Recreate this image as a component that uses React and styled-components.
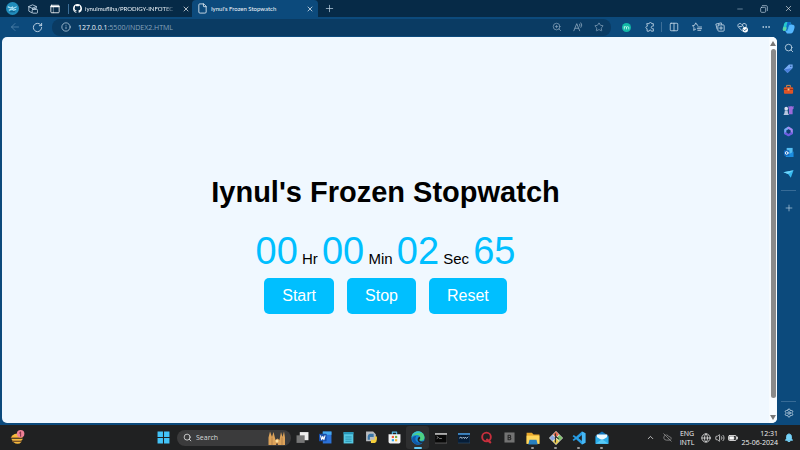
import React, { useEffect, useState } from "react";
import styled, { createGlobalStyle } from "styled-components";
import {
  ArrowLeft, RotateCw, Info, ZoomIn, Star, Columns2, Ellipsis,
  Search, Plus, Settings, X, Minus, File, ChevronUp, Globe, Volume2, CloudOff,
} from "lucide-react";

const GlobalStyle = createGlobalStyle`
  * { box-sizing: border-box; }
  body { margin: 0; background: #0c4a7c; font-family: "Open Sans", "Noto Sans", sans-serif; }
  button, input { font: inherit; color: inherit; }
`;

const Desktop = styled.div`
  display: flex;
  flex-direction: column;
  height: 100vh;
  overflow: hidden;
  color: #dce8f2;
  font-size: 7px;
`;

const TitleBar = styled.header`
  display: flex;
  flex: none;
  height: 17px;
  background: #062a47;
`;

const IconButton = styled.button`
  display: flex;
  flex: none;
  align-items: center;
  justify-content: center;
  width: ${(p) => p.$w || 23}px;
  height: ${(p) => p.$h || 17}px;
  padding: 0;
  border: 0;
  background: none;
  color: ${(p) => p.$color || "#c5d8e8"};
  svg { display: block; }
`;

const Tab = styled.div`
  display: flex;
  align-items: center;
  width: ${(p) => p.$w}px;
  height: 17px;
  padding-left: ${(p) => (p.$active ? 5 : 4)}px;
  gap: 3px;
  color: #f0f6fb;
  background: ${(p) => (p.$active ? "#0c4a7c" : "transparent")};
  border-radius: 4px 4px 0 0;
  svg { flex: none; }
`;

const TabTitle = styled.span`
  flex: 1;
  min-width: 0;
  white-space: nowrap;
  font-family: Lato, "Open Sans", sans-serif;
  font-size: ${(p) => (p.$small ? 6 : 7)}px;
  mask-image: ${(p) => (p.$fade ? "linear-gradient(to right, #000 85%, transparent)" : "none")};
`;

const VerticalRule = styled.span`
  flex: none;
  align-self: center;
  width: 1px;
  height: 10px;
  background: #3d6f98;
`;

const Spacer = styled.div`
  flex: 1;
`;

const Toolbar = styled.div`
  display: flex;
  flex: none;
  align-items: center;
  height: 20px;
  padding-left: 3px;
  background: #0c4a7c;
`;

const AddressBar = styled.form`
  display: flex;
  flex: 1;
  align-items: center;
  height: 17px;
  margin: 0 4px 0 3px;
  padding: 0 2px;
  border-radius: 8px;
  background: #0a3b63;
`;

const Host = styled.label`
  color: #f0f6fb;
  font-size: 7px;
`;

const UrlInput = styled.input`
  flex: 1;
  min-width: 0;
  padding: 0;
  border: 0;
  outline: 0;
  background: none;
  color: #86a3bb;
  font-size: 7px;
`;

const Workspace = styled.div`
  display: flex;
  flex: 1;
  min-height: 0;
  padding: 0 0 2px 2px;
  background: #0c4a7c;
`;

const Page = styled.main`
  display: flex;
  flex: 1;
  overflow: hidden;
  border-radius: 5px;
  background: #f0f8ff;
`;

const Stopwatch = styled.section`
  display: flex;
  flex: 1;
  flex-direction: column;
  align-items: center;
  justify-content: center;
  font-family: "Liberation Sans", Arial, sans-serif;
  color: #000;
`;

const Heading = styled.h1`
  margin: 28px 0 19px;
  font-size: 29px;
  line-height: 36px;
`;

const Time = styled.div`
  margin-bottom: 5px;
  font-size: 15px;
  line-height: 20px;
  white-space: nowrap;
`;

const Digits = styled.span`
  color: #00bfff;
  font-size: 38px;
  line-height: 44px;
`;

const Controls = styled.div`
  display: flex;
  gap: 13px;
`;

const ControlButton = styled.button`
  height: 36px;
  padding: 0 18px;
  border: 0;
  border-radius: 5px;
  background: #00bfff;
  color: #fff;
  font-size: 16px;
`;

const ScrollTrack = styled.div`
  display: flex;
  flex-direction: column;
  align-items: center;
  width: 8px;
  padding: 4px 0 3px;
  gap: 3px;
  background: #f8fcff;
`;

const ScrollThumb = styled.div`
  flex: 1;
  width: 5px;
  margin-bottom: 14px;
  border-radius: 3px;
  background: #8a8a8a;
`;

const Sidebar = styled.aside`
  display: flex;
  flex: none;
  flex-direction: column;
  align-items: center;
  width: 23px;
`;

const HorizontalRule = styled.span`
  flex: none;
  width: 15px;
  height: 1px;
  margin: ${(p) => (p.$roomy ? "6px 0" : "0")};
  background: #376b96;
`;

const Taskbar = styled.footer`
  display: flex;
  flex: none;
  align-items: center;
  height: 25px;
  background: #202122;
`;

const TaskbarSide = styled.div`
  display: flex;
  align-items: center;
  flex: ${(p) => (p.$start ? "0 1 152px" : "none")};
  padding-left: ${(p) => (p.$start ? 6 : 0)}px;
`;

const TaskSearch = styled.label`
  display: flex;
  flex: none;
  align-items: center;
  gap: 4px;
  width: 114px;
  height: 16px;
  margin-left: 2px;
  padding: 0 6px;
  border-radius: 8px;
  background: #3b3b3c;
  color: #f0f0f0;
`;

const SearchInput = styled.input`
  flex: 1;
  min-width: 0;
  padding: 0;
  border: 0;
  outline: 0;
  background: none;
  font-size: 7px;
  &::placeholder { color: #d8d8d8; opacity: 1; }
`;

const AppButton = styled(IconButton)`
  position: relative;
  height: 23px;
  border-radius: 3px;
  background: ${(p) => (p.$active ? "#2e2f30" : "none")};
  &::after {
    content: "";
    display: ${(p) => (p.$open ? "block" : "none")};
    position: absolute;
    bottom: 0;
    width: ${(p) => (p.$active ? 8 : 3)}px;
    height: 2px;
    border-radius: 1px;
    background: ${(p) => (p.$active ? "#63c9f5" : "#9a9a9a")};
  }
`;

const TrayText = styled.div`
  width: ${(p) => p.$w}px;
  font-size: 7px;
  line-height: 9px;
  text-align: ${(p) => p.$align};
  white-space: nowrap;
  color: #f2f2f2;
`;

const Icon = ({ size = 12, children }) => (
  <svg width={size} height={size} viewBox="0 0 24 24" fill="none" stroke="currentColor" strokeWidth="2" strokeLinecap="round" strokeLinejoin="round" aria-hidden="true">
    {children}
  </svg>
);

const ProfileIcon = () => (
  <Icon size={13}>
    <circle cx="12" cy="12" r="12" fill="#218dbc" stroke="none" />
    <path d="M4 9l5 2 3-2 1 3 6-3M6 15l5-2 3 2 4-1" stroke="#b5e4f6" />
    <path d="M8 18h8" stroke="#0d5682" />
  </Icon>
);
const WorkspacesIcon = () => (
  <Icon size={10}>
    <path d="M2 6l9-4 9 4-9 4zM2 6v11l7 4M11 10v2M20 6v4" />
    <rect x="10" y="13" width="13" height="9" rx="2" />
    <path d="M14 13v-2h5v2" />
  </Icon>
);
const TabActionsIcon = () => (
  <Icon size={10}>
    <rect x="2" y="3" width="20" height="18" rx="2" />
    <path d="M3 6h18" strokeWidth="4" />
    <path d="M8 8v13" strokeWidth="1" />
  </Icon>
);
const GithubIcon = () => (
  <svg width="9" height="9" viewBox="0 0 16 16" fill="#fff" aria-hidden="true">
    <path d="M8 0C3.58 0 0 3.58 0 8c0 3.54 2.29 6.53 5.47 7.59.4.07.55-.17.55-.38v-1.49c-2.01.37-2.53-.49-2.69-.94-.09-.23-.48-.94-.82-1.13-.28-.15-.68-.52-.01-.53.63-.01 1.08.58 1.23.82.72 1.21 1.87.87 2.33.66.07-.52.28-.87.51-1.07-1.78-.2-3.64-.89-3.64-3.95 0-.87.31-1.59.82-2.15-.08-.2-.36-1.02.08-2.12 0 0 .67-.21 2.2.82a7.42 7.42 0 014 0c1.53-1.04 2.2-.82 2.2-.82.44 1.1.16 1.92.08 2.12.51.56.82 1.27.82 2.15 0 3.07-1.87 3.75-3.65 3.95.29.25.54.73.54 1.48v2.2c0 .21.15.46.55.38A8.01 8.01 0 0016 8c0-4.42-3.58-8-8-8z" />
  </svg>
);
const ExtensionIcon = () => (
  <Icon size={10}>
    <path d="M5 4h5c0-4 6-4 6 0h4v6h-2c-4 0-4 6 0 6h2v6h-5c0-4-5-4-5 0H5v-6c-4 0-4-6 0-6z" />
  </Icon>
);
const ReadAloudIcon = () => (
  <Icon size={10}>
    <path d="M2 21L9 4l7 17M5 15h8M16 5q2 2 0 5M19 2q5 5 0 11" />
  </Icon>
);
const MediaIcon = () => (
  <Icon size={9}>
    <circle cx="12" cy="12" r="12" fill="#13b9a7" stroke="none" />
    <path d="M6 16v-6M6 11q3-3 6 0v5M12 11q3-3 6 0v5" stroke="#d8fff8" />
  </Icon>
);
const FavoritesIcon = () => (
  <Icon size={10}>
    <path d="M14 8l-2-1-3-5-3 6-5 1 4 4-1 7 5-3M14 12h9M13 16h10M14 20h7" />
  </Icon>
);
const CollectionsIcon = () => (
  <Icon size={10}>
    <path d="M5 17L2 5l13-3 1 4" />
    <rect x="7" y="7" width="15" height="15" rx="2" />
    <path d="M14.500 11v7M11 14.500h7" />
  </Icon>
);
const HealthIcon = () => (
  <Icon size={11}>
    <path d="M12 20L3 11C-1 5 7 0 11 6c5-6 12-1 9 4M5 10h5l2-3 3 5" />
    <circle cx="18" cy="17" r="6" fill="#fff" stroke="none" />
    <path d="M15 17l2 2 4-4" stroke="#0c4a7c" />
  </Icon>
);
const CopilotIcon = () => (
  <Icon size={13}>
    <path d="M8 2h7l3 5-4 2-3 9H5c-5 0-4-5-2-9 1-5 2-7 5-7z" fill="#25c7cf" stroke="none" />
    <path d="M10 2h5l3 6h-5L9 20H6z" fill="#126bc6" stroke="none" />
    <path d="M14 7h5c5 0 5 4 3 9-1 4-3 7-6 7H9l-3-5h4z" fill="#54b7ff" stroke="none" />
    <path d="M3 11l6 1-2 6H4c-4 0-2-4-1-7z" fill="#5fd8a5" stroke="none" />
  </Icon>
);
const TagIcon = () => (
  <Icon size={11}>
    <path d="M13 3h8v8L10 22l-8-8z" fill="#79acf4" stroke="none" />
    <path d="M2 14l8 8 10-11z" fill="#4a7fda" stroke="none" />
    <circle cx="17" cy="7" r="1.500" fill="#174d91" stroke="none" />
  </Icon>
);
const ToolboxIcon = () => (
  <Icon size={11}>
    <path d="M8 7V3h8v4" stroke="#f08a40" />
    <rect x="2" y="7" width="20" height="14" rx="2" fill="#df5427" stroke="none" />
    <path d="M2 12h20" stroke="#9d3218" />
    <path d="M10 10h4v4h-4z" fill="#ffd18c" stroke="none" />
  </Icon>
);
const GamesIcon = () => (
  <Icon size={11}>
    <path d="M12 2h2v2h2V2h3v2h2V2h2v6l-2 2v10h-8V9l-1-1z" fill="#9b6bdb" stroke="none" />
    <circle cx="7" cy="8" r="4" fill="#d7dfef" stroke="none" />
    <path d="M4 12h6l1 6 2 4H1l2-4z" fill="#b8c6df" stroke="none" />
  </Icon>
);
const OfficeIcon = () => (
  <Icon size={11}>
    <path d="M12 4l-7 4v8" stroke="#78a9f6" strokeWidth="5" />
    <path d="M12 4l7 4v8" stroke="#a58af0" strokeWidth="5" />
    <path d="M5 16l7 4 7-4" stroke="#6f5be0" strokeWidth="5" />
    <path d="M12 8l4 2v4l-4 2-4-2v-4z" fill="#0f3f73" stroke="none" />
  </Icon>
);
const OutlookIcon = () => (
  <Icon size={11}>
    <path d="M8 2h13v18H8z" fill="#53bdf4" stroke="none" />
    <path d="M6 10l8 5 9-5v12H6z" fill="#1b8de0" stroke="none" />
    <rect x="2" y="7" width="12" height="12" rx="1" fill="#1269bd" stroke="none" />
    <circle cx="8" cy="13" r="3" stroke="#fff" />
  </Icon>
);
const SendIcon = () => (
  <Icon size={11}>
    <path d="M1 9l22-4-6 16-6-8z" fill="#36b9ef" stroke="none" />
    <path d="M11 13l12-8L1 9z" fill="#6fd5fb" stroke="none" />
  </Icon>
);
const WidgetIcon = () => (
  <Icon size={15}>
    <path d="M3 9q9-7 17 0v3H2zM2 14h19l-3 3H4zM5 19h13q-5 6-13 0" fill="#f5b83c" stroke="none" />
    <path d="M2 12h17M4 18h14" stroke="#dc8b31" strokeWidth="1" />
    <circle cx="17" cy="6" r="6" fill="#ef8196" stroke="none" />
    <path d="M15 5l2-2v7" stroke="#722b3d" strokeWidth="1.500" />
  </Icon>
);
const WindowsIcon = () => (
  <Icon size={13}>
    <path d="M1 1h10v10H1zM13 1h10v10H13zM1 13h10v10H1zM13 13h10v10H13z" fill="#43c3f7" stroke="none" />
  </Icon>
);
const CathedralIcon = () => (
  <svg width="17" height="14" viewBox="0 0 34 28" aria-hidden="true">
    <path d="M1 28V13L4 1l4 11 3-10 4 16 4-3 4 3 3-16 3 10 3-11 2 12v15z" fill="#dda35a" />
    <path d="M8 13v15M28 13v15" stroke="#8a6038" strokeWidth="1" />
    <circle cx="18" cy="20" r="3" fill="#fbe0a0" />
    <path d="M16 28v-3h4v3" fill="#5c412e" />
  </svg>
);
const TaskViewIcon = () => (
  <Icon size={13}>
    <path d="M7 2h16v15H7z" fill="#eeeeee" stroke="none" />
    <path d="M1 8h15v14H1z" fill="#777" stroke="none" />
  </Icon>
);
const WordIcon = () => (
  <Icon size={13}>
    <path d="M7 1h16v22H7z" fill="#2b72d9" stroke="none" />
    <path d="M7 1h16v6H7z" fill="#45a8ed" stroke="none" />
    <rect x="0" y="5" width="14" height="14" rx="1" fill="#174da6" stroke="none" />
    <path d="M3 9l2 7 2-6 2 6 2-7" stroke="#fff" />
  </Icon>
);
const NotepadIcon = () => (
  <Icon size={13}>
    <path d="M3 2h18v21H3z" fill="#56c8e2" stroke="none" />
    <path d="M3 2h18v4H3z" fill="#2695b8" stroke="none" />
    <path d="M7 11h10M7 15h10M7 19h10" stroke="#1f87a8" strokeWidth="1.500" />
  </Icon>
);
const PythonIcon = () => (
  <Icon size={13}>
    <path d="M2 1h13l5 5v13H2z" fill="#b8bcc0" stroke="none" />
    <path d="M9 5h7v6H9v5H5v-6q0-4 4-5" fill="#3976a8" stroke="none" />
    <path d="M18 10h4v5q0 5-4 7h-7v-6h7z" fill="#f5cf3b" stroke="none" />
  </Icon>
);
const StoreIcon = () => (
  <Icon size={13}>
    <path d="M8 7V2h8v5" stroke="#55bce8" />
    <path d="M1 6h22v14q0 3-3 3H4q-3 0-3-3z" fill="#f2f3f3" stroke="none" />
    <path d="M7 9h4v4H7z" fill="#ee5c38" stroke="none" />
    <path d="M13 9h4v4h-4z" fill="#77ae3b" stroke="none" />
    <path d="M7 15h4v4H7z" fill="#2aa4e8" stroke="none" />
    <path d="M13 15h4v4h-4z" fill="#f6b72d" stroke="none" />
  </Icon>
);
const EdgeIcon = () => (
  <Icon size={14}>
    <circle cx="12" cy="12" r="11.500" fill="#1687d5" stroke="none" />
    <path d="M1 10C3-2 21-2 23 10c1 7-7 8-9 5 4-5 0-9-5-8-4 0-7 2-8 3z" fill="#4dd183" stroke="none" />
    <path d="M1 11C3 1 14-1 19 3 10 2 4 5 1 11z" fill="#34bdd8" stroke="none" />
    <path d="M9 9c-5 8 3 14 12 10-8 9-20 2-19-6 1-3 4-5 7-4z" fill="#1258a7" stroke="none" />
    <path d="M14 10c3 1 2 4 0 5 0 3 5 4 9 2l-2 3c-8 2-13-5-7-10z" fill="#202122" stroke="none" />
  </Icon>
);
const TerminalIcon = ({ blue }) => (
  <Icon size={12}>
    <rect x="0" y="3" width="24" height="19" fill={blue ? "#061d37" : "#080808"} stroke={blue ? "#345d7d" : "#999"} strokeWidth="1" />
    <path d="M0 4h24" stroke={blue ? "#4a9be0" : "#c8c8c8"} strokeWidth="3" />
    {blue ? <path d="M3 12l3-2 2 3 3-3 2 3 2-3 2 3 3-3" stroke="#d0e0ef" strokeWidth="1.500" /> : <path d="M4 9l3 2-3 2M9 13h4" stroke="#ddd" strokeWidth="1" />}
  </Icon>
);
const QIcon = () => (
  <Icon size={13}>
    <circle cx="12" cy="11" r="8" stroke="#c72f3d" strokeWidth="3.500" />
    <path d="M13 16l6 5" stroke="#c72f3d" strokeWidth="4" />
  </Icon>
);
const BlockIcon = () => (
  <Icon size={11}>
    <path d="M1 1h22v22H1z" fill="#737373" stroke="none" />
    <path d="M9 7h4q3 2 0 5 4 3 0 5H9zM9 12h4" stroke="#292929" strokeWidth="2.500" />
  </Icon>
);
const FolderIcon = () => (
  <Icon size={14}>
    <path d="M1 3h9l3 3h10v16H1z" fill="#e8a72c" stroke="none" />
    <path d="M1 8h22v14H1z" fill="#ffd65b" stroke="none" />
    <path d="M6 15h12l2 8H4z" fill="#287fbe" stroke="none" />
  </Icon>
);
const GitIcon = () => (
  <Icon size={14}>
    <path d="M12 0l12 12-12 12L0 12z" fill="#ecebdc" stroke="none" />
    <path d="M12 1l5 5-5 5-5-5z" fill="#e5694d" stroke="none" />
    <path d="M1 12l5-5 5 5-5 5z" fill="#8fa8e0" stroke="none" />
    <path d="M13 12l5-5 5 5-5 5z" fill="#7cc06a" stroke="none" />
    <path d="M12 13l5 5-5 5-5-5z" fill="#e6c84a" stroke="none" />
    <path d="M11 5v14M11 9l5 4" stroke="#343434" />
  </Icon>
);
const CodeIcon = () => (
  <Icon size={14}>
    <path d="M17 1l6 3v16l-6 3L7 14l-4 3-2-2 4-3-4-3 2-2 4 3zM17 7l-6 5 6 5z" fill="#279de5" fillRule="evenodd" stroke="none" />
    <path d="M17 1l6 3v16l-6 3z" fill="#47b7f3" stroke="none" />
  </Icon>
);
const MailIcon = () => (
  <Icon size={14}>
    <path d="M1 8l11-7 11 7v14H1z" fill="#1175bb" stroke="none" />
    <path d="M3 6h18v9H3z" fill="#edfaff" stroke="none" />
    <path d="M1 9l11 7 11-7v13H1z" fill="#2badea" stroke="none" />
    <path d="M1 22l11-8 11 8z" fill="#59caf7" stroke="none" />
  </Icon>
);
const BatteryIcon = () => (
  <Icon size={10}>
    <rect x="1" y="6" width="19" height="12" rx="3" />
    <path d="M4 9h10v6H4z" fill="#fff" />
    <path d="M22 10v4" strokeWidth="3" />
  </Icon>
);
const BellIcon = () => (
  <Icon size={10}>
    <path d="M4 17l2-4V9c0-9 12-9 12 0v4l2 4zM9 19h6q-3 4-6 0" fill="#76d4fa" stroke="#76d4fa" />
  </Icon>
);
const ArrowIcon = ({ down }) => (
  <svg width="6" height="5" viewBox="0 0 6 5" aria-hidden="true">
    <path d={down ? "M0 0h6L3 5z" : "M3 0l3 5H0z"} fill="#777" />
  </svg>
);

const sidebarTools = [
  ["Search sidebar", <Search size={10} />], ["Shopping", <TagIcon />], ["Tools", <ToolboxIcon />],
  ["Games", <GamesIcon />], ["Microsoft 365", <OfficeIcon />], ["Outlook", <OutlookIcon />], ["Drop", <SendIcon />],
];
const apps = [
  ["Task view", <TaskViewIcon />], ["Word", <WordIcon />], ["Notepad", <NotepadIcon />], ["Python", <PythonIcon />],
  ["Store", <StoreIcon />], ["Edge", <EdgeIcon />, true, true], ["Command prompt", <TerminalIcon />],
  ["MySQL", <TerminalIcon blue />], ["Query", <QIcon />], ["Blocks", <BlockIcon />], ["File explorer", <FolderIcon />, true],
  ["Git", <GitIcon />, true], ["Code", <CodeIcon />, true], ["Mail", <MailIcon />, true],
];
const pad = (n) => String(n).padStart(2, "0");

export default function App() {
  const [ticks, setTicks] = useState(265);
  const [running, setRunning] = useState(false);
  useEffect(() => {
    if (!running) return undefined;
    const timer = setInterval(() => setTicks((t) => t + 1), 10);
    return () => clearInterval(timer);
  }, [running]);

  return (
    <Desktop>
      <GlobalStyle />
      <TitleBar>
        <IconButton $w={24} aria-label="Profile"><ProfileIcon /></IconButton>
        <IconButton $w={18} aria-label="Workspaces"><WorkspacesIcon /></IconButton>
        <IconButton $w={26} $color="#fff" aria-label="Tab actions"><TabActionsIcon /></IconButton>
        <VerticalRule />
        <Tab $w={123}>
          <GithubIcon />
          <TabTitle $small $fade>iynulmufliha/PRODIGY-INFOTEC</TabTitle>
          <IconButton $w={12} $color="#fff" aria-label="Close tab"><X size={8} /></IconButton>
        </Tab>
        <Tab $w={126} $active>
          <File size={11} strokeWidth={1.75} />
          <TabTitle $small>Iynul's Frozen Stopwatch</TabTitle>
          <IconButton $w={17} $color="#fff" aria-label="Close tab"><X size={8} /></IconButton>
        </Tab>
        <IconButton $w={22} aria-label="New tab"><Plus size={11} strokeWidth={1.5} /></IconButton>
        <Spacer />
        <IconButton $w={24} aria-label="Minimize"><Minus size={8} strokeWidth={1.5} /></IconButton>
        <IconButton $w={24} aria-label="Restore"><Icon size={8}><rect x="2" y="7" width="15" height="15" rx="3" /><path d="M7 2h12q3 0 3 3v12" /></Icon></IconButton>
        <IconButton $w={24} $color="#fff" aria-label="Close"><X size={9} strokeWidth={1.5} /></IconButton>
      </TitleBar>

      <Toolbar>
        <IconButton $color="#4e81a8" aria-label="Back"><ArrowLeft size={12} strokeWidth={1.75} /></IconButton>
        <IconButton aria-label="Refresh"><RotateCw size={11} /></IconButton>
        <AddressBar onSubmit={(e) => e.preventDefault()}>
          <IconButton $w={24} type="button" aria-label="Site information"><Info size={10} strokeWidth={1.75} /></IconButton>
          <Host htmlFor="address">127.0.0.1</Host>
          <UrlInput id="address" defaultValue=":5500/INDEX2.HTML" />
          <IconButton $w={21} $color="#8aa6bd" type="button" aria-label="Zoom"><ZoomIn size={10} strokeWidth={1.75} /></IconButton>
          <IconButton $w={21} $color="#8aa6bd" type="button" aria-label="Read aloud"><ReadAloudIcon /></IconButton>
          <IconButton $w={21} $color="#8aa6bd" type="button" aria-label="Add to favorites"><Star size={10} strokeWidth={1.75} /></IconButton>
        </AddressBar>
        <IconButton aria-label="Media extension"><MediaIcon /></IconButton>
        <IconButton aria-label="Extensions"><ExtensionIcon /></IconButton>
        <VerticalRule />
        <IconButton aria-label="Split screen"><Columns2 size={10} /></IconButton>
        <IconButton aria-label="Favorites"><FavoritesIcon /></IconButton>
        <IconButton aria-label="Collections"><CollectionsIcon /></IconButton>
        <IconButton aria-label="Browser essentials"><HealthIcon /></IconButton>
        <IconButton aria-label="More"><Ellipsis size={10} /></IconButton>
        <IconButton aria-label="Copilot"><CopilotIcon /></IconButton>
      </Toolbar>

      <Workspace>
        <Page>
          <Stopwatch>
            <Heading>Iynul's Frozen Stopwatch</Heading>
            <Time role="timer">
              <Digits>{pad(Math.floor(ticks / 360000))}</Digits> Hr{" "}
              <Digits>{pad(Math.floor(ticks / 6000) % 60)}</Digits> Min{" "}
              <Digits>{pad(Math.floor(ticks / 100) % 60)}</Digits> Sec{" "}
              <Digits>{pad(ticks % 100)}</Digits>
            </Time>
            <Controls>
              <ControlButton onClick={() => setRunning(true)}>Start</ControlButton>
              <ControlButton onClick={() => setRunning(false)}>Stop</ControlButton>
              <ControlButton onClick={() => { setRunning(false); setTicks(0); }}>Reset</ControlButton>
            </Controls>
          </Stopwatch>
          <ScrollTrack>
            <ArrowIcon />
            <ScrollThumb />
            <ArrowIcon down />
          </ScrollTrack>
        </Page>
        <Sidebar>
          {sidebarTools.map(([name, icon]) => <IconButton key={name} $h={21} aria-label={name}>{icon}</IconButton>)}
          <HorizontalRule $roomy />
          <IconButton $h={21} aria-label="Customize"><Plus size={10} strokeWidth={1.5} /></IconButton>
          <Spacer />
          <HorizontalRule />
          <IconButton $h={21} aria-label="Settings"><Settings size={10} /></IconButton>
        </Sidebar>
      </Workspace>

      <Taskbar>
        <TaskbarSide $start><IconButton aria-label="Widgets"><WidgetIcon /></IconButton></TaskbarSide>
        <AppButton aria-label="Start menu"><WindowsIcon /></AppButton>
        <TaskSearch>
          <Search size={9} />
          <SearchInput placeholder="Search" aria-label="Search" />
          <CathedralIcon />
        </TaskSearch>
        {apps.map(([name, icon, open, active]) => (
          <AppButton key={name} $open={open} $active={active} aria-label={name}>{icon}</AppButton>
        ))}
        <Spacer />
        <TaskbarSide>
          <IconButton $w={16} $color="#eee" aria-label="Hidden icons"><ChevronUp size={9} /></IconButton>
          <IconButton $w={18} $color="#999" aria-label="Cloud offline"><CloudOff size={9} /></IconButton>
          <TrayText $w={22} $align="center">ENG<br />INTL</TrayText>
          <IconButton $w={16} $color="#ddd" aria-label="Network"><Globe size={10} /></IconButton>
          <IconButton $w={12} $color="#ddd" aria-label="Volume"><Volume2 size={10} /></IconButton>
          <IconButton $w={13} $color="#eee" aria-label="Battery"><BatteryIcon /></IconButton>
          <TrayText $w={39} $align="right">12:31<br />25-06-2024</TrayText>
          <IconButton $w={22} aria-label="Notifications"><BellIcon /></IconButton>
        </TaskbarSide>
      </Taskbar>
    </Desktop>
  );
}
